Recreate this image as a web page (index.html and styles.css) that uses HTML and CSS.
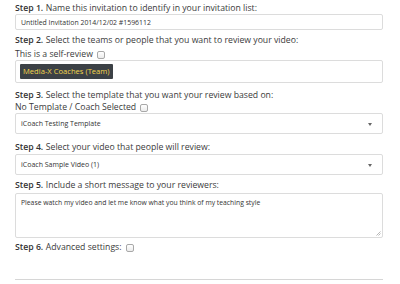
FILE: index.html
```html
<!DOCTYPE html>
<html>
<head>
<meta charset="utf-8">
<link rel="stylesheet" href="styles.css">
</head>
<body>
<div class="form">
  <div class="label l1"><b>Step 1.</b> Name this invitation to identify in your invitation list:</div>
  <div class="input i1">Untitled Invitation 2014/12/02 #1596112</div>

  <div class="label l2"><b>Step 2.</b> Select the teams or people that you want to review your video:</div>
  <div class="label sub">This is a self-review <span class="check"></span></div>
  <div class="input tags"><span class="tag">Media-X Coaches (Team)</span></div>

  <div class="label l3"><b>Step 3.</b> Select the template that you want your review based on:</div>
  <div class="label sub2">No Template / Coach Selected <span class="check"></span></div>
  <div class="input select">iCoach Testing Template<span class="arrow"></span></div>

  <div class="label l4"><b>Step 4.</b> Select your video that people will review:</div>
  <div class="input select s2">iCoach Sample Video (1)<span class="arrow"></span></div>

  <div class="label l5"><b>Step 5.</b> Include a short message to your reviewers:</div>
  <div class="input textarea">Please watch my video and let me know what you think of my teaching style<span class="grip"><svg width="5" height="5" viewBox="0 0 5 5"><path d="M0.5 4.5 L4.5 0.5 M2.5 4.5 L4.5 2.5" stroke="#999" stroke-width="0.7"/></svg></span></div>

  <div class="label l6"><b>Step 6.</b> Advanced settings: <span class="check"></span></div>

  <div class="rule"></div>
</div>
</body>
</html>
```

FILE: styles.css
```css
html, body {
  margin: 0;
  padding: 0;
  background: #ffffff;
}
.form {
  display: flex;
  flex-direction: column;
  width: 368px;
  padding: 2px 0 0 15px;
  font-family: "Open Sans", "DejaVu Sans", sans-serif;
  color: #3b3b3b;
}
.label {
  font-size: 8.7px;
  line-height: 12px;
  height: 12px;
  white-space: nowrap;
  display: flex;
  align-items: center;
}
.label b {
  font-weight: 600;
  color: #333;
  margin-right: 2.5px;
}
.l2 { margin-top: 4px; }
.sub { margin-top: 2px; }
.l3 { margin-top: 6px; }
.l4 { margin-top: 7px; margin-bottom: 1px; }
.l5 { margin-top: 4px; margin-bottom: 2px; }
.l6 { margin-top: 3px; }
.check {
  display: inline-block;
  width: 6px;
  height: 6px;
  border: 1px solid #a8a8a8;
  border-radius: 2px;
  background: linear-gradient(#ffffff, #ececec);
  margin-left: 4px;
  margin-top: 1px;
}
.input {
  box-sizing: border-box;
  border: 1px solid #dcdcdc;
  border-radius: 2px;
  background: #fff;
  font-size: 6.9px;
  color: #333;
  display: flex;
  align-items: center;
  padding-left: 5px;
  position: relative;
}
.i1 { height: 16px; }
.tags {
  height: 23px;
  padding-left: 4px;
}
.tag {
  background: #3c4146;
  color: #f3d54c;
  font-size: 7.6px;
  height: 15px;
  line-height: 15px;
  padding: 0 3px 0 3px;
  border-radius: 1px;
  white-space: nowrap;
}
.select {
  height: 21px;
  font-size: 7px;
}
.arrow {
  position: absolute;
  right: 10px;
  top: 9px;
  width: 0;
  height: 0;
  border-left: 2.5px solid transparent;
  border-right: 2.5px solid transparent;
  border-top: 3px solid #666;
}
.textarea {
  height: 45px;
  align-items: flex-start;
  padding-top: 4px;
  font-size: 6.8px;
}
.grip {
  position: absolute;
  right: 1px;
  bottom: 1px;
  width: 5px;
  height: 5px;
  display: flex;
}
.rule {
  margin-top: 26px;
  height: 1px;
  background: #d6d6d6;
}
```
